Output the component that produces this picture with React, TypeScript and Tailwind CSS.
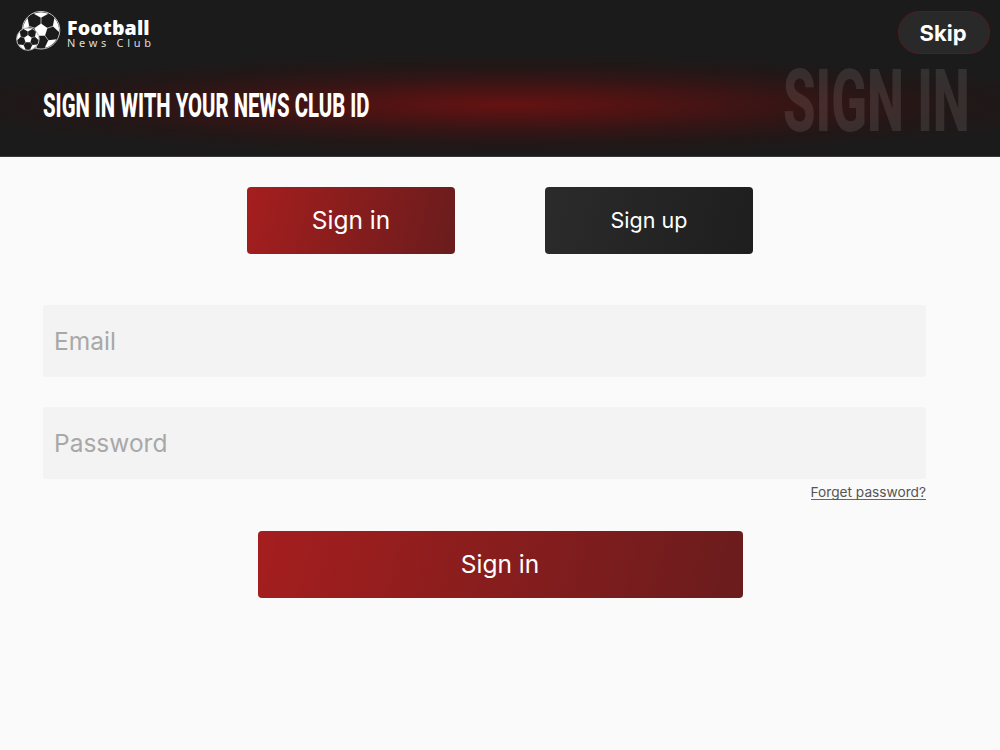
import React, { useState } from "react";
import clsx from "clsx";

interface IBallProps {
    cx: number;
    cy: number;
    r: number;
}

const point = (radius: number, angle: number) => {
    const rad = (angle * Math.PI) / 180;
    return `${(radius * Math.cos(rad)).toFixed(2)} ${(radius * Math.sin(rad)).toFixed(2)}`;
};

const angles = [-90, -18, 54, 126, 198];

const Ball: React.FC<IBallProps> = ({ cx, cy, r }) => (
    <g transform={`translate(${cx} ${cy}) scale(${r / 50})`}>
        <circle r="50" fill="#1b1b1b" stroke="#d4d4d4" strokeWidth={45 / r} />
        <path
            d={`M${angles.map(a => point(18, a)).join("L")}Z`}
            fill="white"
        />
        {angles.map(a => (
            <g key={a}>
                <path
                    d={`M${point(33, a)}L${point(48, a + 24)}A50 50 0 0 0 ${point(48, a - 24)}Z`}
                    fill="white"
                />
                <path
                    d={`M${point(16, a)}L${point(35, a)}`}
                    stroke="#c8c8c8"
                    strokeWidth="2.2"
                />
            </g>
        ))}
    </g>
);

const Logo: React.FC = () => (
    <div className="flex items-start">
        <svg width="46" height="42" viewBox="15 10 46 42" fill="none">
            <Ball cx={41} cy={30.2} r={18.8} />
            <Ball cx={27.9} cy={39} r={11.3} />
        </svg>
        <div className="ml-[6px] pt-[8px] font-['Noto_Sans'] text-white">
            <div className="h-[19px] text-[19.5px] leading-[19px] font-black tracking-[0.15px] whitespace-nowrap">
                Football
            </div>
            <div className="text-[11px] leading-[11px] tracking-[3.7px] whitespace-nowrap text-[#dedede]">
                News Club
            </div>
        </div>
    </div>
);

interface IFieldProps {
    label: string;
    type: string;
    value: string;
    onChange: (value: string) => void;
}

const Field: React.FC<IFieldProps> = ({ label, type, value, onChange }) => (
    <input
        type={type}
        placeholder={label}
        value={value}
        onChange={e => onChange(e.target.value)}
        className="block h-[72px] w-full rounded-[3px] bg-[#f3f3f3] px-[11px] pb-[1px] text-[24.5px] font-normal text-[#333] outline-none placeholder:text-[#a8a8a8]"
    />
);

const App: React.FC = () => {
    const [isSignUp, setIsSignUp] = useState(false);
    const [email, setEmail] = useState("");
    const [password, setPassword] = useState("");

    return (
        <div className="h-[750px] w-[1000px] overflow-hidden bg-[#fafafa] font-[Inter,sans-serif]">
            <header className="h-[157px] border-b border-[#393737] bg-[#1b1b1b] bg-[radial-gradient(590px_52px_at_508px_105px,#651212_0%,#4d1313_25%,#341515_50%,#221717_75%,#1b1b1b_100%)]">
                <div className="flex h-[54px] items-start justify-between pt-[10px] pr-[10px] pl-[15px]">
                    <Logo />
                    <button className="mt-[1px] h-[43px] w-[92px] rounded-full border border-[#571b1d] bg-[#292929] pt-[2px] pr-[2px] text-[22px] font-bold text-white">
                        Skip
                    </button>
                </div>
                <div className="flex justify-between pr-[32px] pl-[43px] font-[Roboto,sans-serif] whitespace-nowrap">
                    <h1 className="mt-[31px] h-[40px] w-[326px] origin-left scale-x-[0.597] text-[34px] leading-[40px] font-extrabold text-white">
                        SIGN IN WITH YOUR NEWS CLUB ID
                    </h1>
                    <div className="mt-[1px] h-[92px] w-[185px] origin-left scale-x-[0.604] text-[87px] leading-[92px] font-extrabold text-white/10">
                        SIGN IN
                    </div>
                </div>
            </header>
            <main className="pt-[30px] pr-[74px] pl-[43px]">
                <div className="-mr-[31px] flex justify-center gap-[90px]">
                    <button
                        onClick={() => setIsSignUp(false)}
                        className={clsx(
                            "h-[67px] w-[208px] rounded-[4px] bg-linear-[105deg,#a51e1e,#6a1c1d] font-normal text-white",
                            isSignUp ? "text-[21.5px]" : "text-[24.5px]",
                        )}
                    >
                        Sign in
                    </button>
                    <button
                        onClick={() => setIsSignUp(true)}
                        className={clsx(
                            "h-[67px] w-[208px] rounded-[4px] bg-linear-[105deg,#2b2b2b,#1e1e1e] font-normal text-white",
                            isSignUp ? "text-[24.5px]" : "text-[21.5px]",
                        )}
                    >
                        Sign up
                    </button>
                </div>
                <form className="mt-[51px]" onSubmit={e => e.preventDefault()}>
                    <div className="flex flex-col gap-[30px]">
                        <Field
                            label="Email"
                            type="email"
                            value={email}
                            onChange={setEmail}
                        />
                        <Field
                            label="Password"
                            type="password"
                            value={password}
                            onChange={setPassword}
                        />
                    </div>
                    <div className="flex h-[52px] justify-end pt-[5px]">
                        <a
                            href="#"
                            className="h-[16px] border-b border-[#666] text-[13.7px] leading-[16px] font-normal text-[#555]"
                        >
                            Forget password?
                        </a>
                    </div>
                    <div className="-mr-[31px] flex justify-center">
                        <button
                            type="submit"
                            className="h-[67px] w-[485px] rounded-[4px] bg-linear-[105deg,#a51e1e,#6a1c1d] text-[24.5px] font-normal text-white"
                        >
                            Sign in
                        </button>
                    </div>
                </form>
            </main>
        </div>
    );
};

export default App;
